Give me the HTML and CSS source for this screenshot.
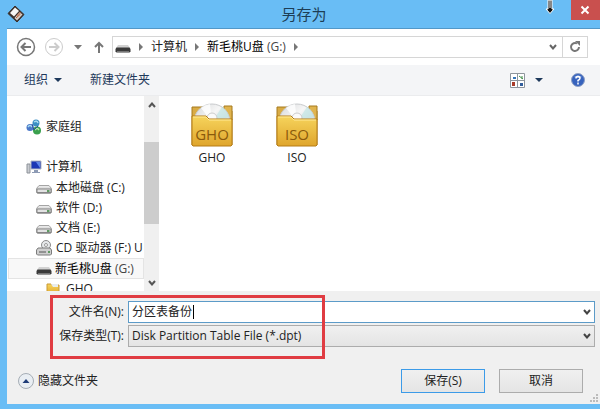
FILE: index.html
```html
<!DOCTYPE html>
<html lang="zh-CN">
<head>
    <meta charset="UTF-8">
    <meta name="viewport" content="width=device-width, initial-scale=1.0">
    <title>另存为</title>
    <link rel="stylesheet" href="styles.css">
</head>
<body>
    <svg class="defs" width="0" height="0" aria-hidden="true">
        <defs>
            <linearGradient id="gold" x1="0" y1="0" x2="0" y2="1">
                <stop offset="0" stop-color="#f6d45c"/>
                <stop offset="1" stop-color="#dfa52c"/>
            </linearGradient>
            <linearGradient id="disc" x1="0" y1="0" x2="1" y2="1">
                <stop offset="0" stop-color="#d4d6d8"/>
                <stop offset="0.4" stop-color="#f6f6f6"/>
                <stop offset="0.6" stop-color="#e2e4e6"/>
                <stop offset="1" stop-color="#a9dcdc"/>
            </linearGradient>
            <linearGradient id="metal" x1="0" y1="0" x2="0" y2="1">
                <stop offset="0" stop-color="#f2f2f2"/>
                <stop offset="1" stop-color="#a9a9a9"/>
            </linearGradient>
            <symbol id="drive" viewBox="0 0 16 16">
                <path d="M3 5.500h10l2.500 3v4l-1 1h-13l-1-1v-4z" fill="url(#metal)" stroke="#a5a5a5"/>
                <path d="M1 9h14v3.500H1z" fill="#e2e2e2" stroke="#858585"/>
                <path d="M11 10h2.500v2H11z" fill="#5f9a63"/>
            </symbol>
            <symbol id="usb" viewBox="0 0 16 16">
                <path d="M3 6h10l2 3H1z" fill="#d2d2d2"/>
                <path d="M1.500 8.500h13l1 1.500v2.500l-1 1h-13l-1-1V10z" fill="#3a3a3a"/>
                <path d="M2 12.500h12" stroke="#777"/>
            </symbol>
            <symbol id="folder-disc" viewBox="0 0 42 46">
                <path d="M1 43V5h12l2 4h26v34z" fill="#d9ab44" stroke="#a67a1f"/>
                <path d="M33 4h8v14h-8z" fill="#e0b44e" stroke="#a67a1f"/>
                <circle cx="21" cy="20" r="18" fill="url(#disc)" stroke="#c9cbcd"/>
                <path d="M21 20L10 6a18 18 0 0 1 9-4z" fill="#fff" opacity="0.8"/>
                <path d="M21 20l17-5a18 18 0 0 0-7-10z" fill="#b9e4e2" opacity="0.6"/>
                <circle cx="21" cy="16" r="5" fill="#fafafa" stroke="#ccc"/>
                <path d="M1 14h14l3 3h23v26l-1 1H2l-1-1z" fill="url(#gold)" stroke="#b67d15"/>
                <path d="M2 15h13l3 3h22" fill="none" stroke="#ffe997"/>
            </symbol>
        </defs>
    </svg>

    <div class="window">
        <header class="titlebar">
            <svg class="app-icon" width="18" height="18" viewBox="0 0 18 18">
                <path d="M8 1L17 9.500L10 17L1 8.500z" fill="#3b302b" stroke="#3b302b" stroke-linejoin="round"/>
                <path d="M8 2.500L12 6L7 11.500L3 8z" fill="#f7f7f5"/>
                <path d="M12.500 7L15.500 9.500L10 15.500L7.500 13z" fill="#d9d0c8"/>
                <path d="M9.500 11l4-4M9 13l4.500-4" stroke="#b55a32"/>
            </svg>
            <h1>另存为</h1>
            <button class="close" aria-label="关闭">
                <svg width="10" height="10" viewBox="0 0 10 10"><path d="M1.500 1.500l7 7M8.500 1.500l-7 7" stroke="#fff" stroke-width="2"/></svg>
            </button>
            <svg class="cursor" width="10" height="14" viewBox="0 0 10 14">
                <path d="M3 0v9H1l4 4.500L9 9H7V0z" fill="#111" stroke="#fff"/>
                <path d="M5 0v8" stroke="#fff"/>
            </svg>
        </header>

        <main class="dialog">
            <nav class="navbar">
                <button class="round" aria-label="后退">
                    <svg width="20" height="20" viewBox="0 0 20 20" fill="none" stroke="#777"><circle cx="10" cy="10" r="8.500" stroke-width="1.500"/><path d="M15 10H6M9.500 6L5.500 10l4 4" stroke-width="2"/></svg>
                </button>
                <button class="round" aria-label="前进">
                    <svg width="20" height="20" viewBox="0 0 20 20" fill="none" stroke="#ccc"><circle cx="10" cy="10" r="8.500"/><path d="M5 10h9M10.500 6l4 4l-4 4" stroke-width="2"/></svg>
                </button>
                <button class="history" aria-label="最近的位置">
                    <svg width="8" height="5" viewBox="0 0 8 5"><path d="M0 0h8L4 4.500z" fill="#777"/></svg>
                </button>
                <button class="up" aria-label="上移">
                    <svg width="10" height="12" viewBox="0 0 10 12"><path d="M5 12V2M1 6l4-4l4 4" fill="none" stroke="#777" stroke-width="2"/></svg>
                </button>
                <div class="address">
                    <svg width="16" height="16"><use href="#usb"/></svg>
                    <svg class="sep" width="4" height="8" viewBox="0 0 4 8"><path d="M0 0l4 4l-4 4z" fill="#777"/></svg>
                    <a href="#">计算机</a>
                    <svg class="sep" width="4" height="8" viewBox="0 0 4 8"><path d="M0 0l4 4l-4 4z" fill="#777"/></svg>
                    <a href="#" class="current">新毛桃U盘 <span>(G:)</span></a>
                    <svg class="sep" width="4" height="8" viewBox="0 0 4 8"><path d="M0 0l4 4l-4 4z" fill="#777"/></svg>
                    <button class="drop" aria-label="以前的位置">
                        <svg width="8" height="6" viewBox="0 0 8 6"><path d="M1 1l3 3.500L7 1" fill="none" stroke="#666" stroke-width="2"/></svg>
                    </button>
                    <button class="refresh" aria-label="刷新">
                        <svg width="12" height="12" viewBox="0 0 12 12"><path d="M8 2.500A4 4 0 1 0 10 6" fill="none" stroke="#777" stroke-width="2"/><path d="M6 0h5v5z" fill="#777"/></svg>
                    </button>
                </div>
            </nav>

            <div class="toolbar">
                <button>组织 <svg width="8" height="4" viewBox="0 0 8 4"><path d="M0 0h8L4 4z" fill="#1e395b"/></svg></button>
                <button>新建文件夹</button>
                <button class="view" aria-label="更改视图">
                    <svg width="15" height="15" viewBox="0 0 15 15">
                        <path d="M.5.500h14v14H.500z" fill="#fff" stroke="#8e959c"/>
                        <path d="M7.500 0v15M0 7.500h15" stroke="#8e959c"/>
                        <path d="M3 4h3v2H3z" fill="#3475b8"/>
                        <path d="M9 3l4 3M12 3v3" stroke="#3f8d46"/>
                        <path d="M2 9h3v4H2z" fill="#a93c2a"/>
                        <path d="M10 10h3v3h-3z" fill="#315d9c"/>
                    </svg>
                    <svg width="8" height="4" viewBox="0 0 8 4"><path d="M0 0h8L4 4z" fill="#1e395b"/></svg>
                </button>
                <button class="help" aria-label="帮助">
                    <svg width="14" height="14" viewBox="0 0 14 14">
                        <circle cx="7" cy="7" r="6.500" fill="#3763bd" stroke="#8fa0c4"/>
                        <path d="M3 4a5 4 0 0 1 8 0q-4 2-8 0" fill="#8ea9e0"/>
                        <path d="M5 5.500Q5 3.500 7 3.500T9 5.300Q9 6.300 7 7.500V8.500M7 9.500v2" fill="none" stroke="#fff" stroke-width="1.500"/>
                    </svg>
                </button>
            </div>

            <div class="browser">
                <aside class="tree">
                    <ul>
                        <li class="group">
                            <svg width="16" height="16" viewBox="0 0 16 16">
                                <circle cx="10" cy="4" r="3.500" fill="#3a8fc4"/>
                                <circle cx="4" cy="8.500" r="3.500" fill="#4a78c8"/>
                                <circle cx="11" cy="11.500" r="4" fill="#3aa04e"/>
                                <path d="M8 3q3-2 4 1M2 8q2-3 4 0" stroke="#a8dcf0" stroke-width="1.500" fill="none"/>
                                <path d="M9 11q2-3 4 0" stroke="#b9e8a5" stroke-width="1.500" fill="none"/>
                                <path d="M6 5l2 6l4-4" stroke="#274f9c" fill="none"/>
                            </svg>
                            <a href="#">家庭组</a>
                        </li>
                        <li class="group">
                            <svg width="16" height="16" viewBox="0 0 16 16">
                                <path d="M1 5h3v9H1z" fill="#c9ccd1" stroke="#8d9299"/>
                                <path d="M5 2h10v8H5z" fill="#1b36b5" stroke="#b0b5c0"/>
                                <path d="M10 3h4v6z" fill="#5f86e8"/>
                                <path d="M8 11h4v2h2v1H6v-1h2z" fill="#8d9bb5"/>
                            </svg>
                            <a href="#">计算机</a>
                        </li>
                        <li><svg width="16" height="16"><use href="#drive"/></svg><a href="#">本地磁盘 (C:)</a></li>
                        <li><svg width="16" height="16"><use href="#drive"/></svg><a href="#">软件 (D:)</a></li>
                        <li><svg width="16" height="16"><use href="#drive"/></svg><a href="#">文档 (E:)</a></li>
                        <li>
                            <svg width="16" height="16" viewBox="0 0 16 16">
                                <circle cx="10" cy="5" r="4.500" fill="#e6e8ea" stroke="#8b8b8b"/>
                                <circle cx="10" cy="5" r="1.500" fill="#fff" stroke="#999"/>
                                <path d="M2 8h12l1.500 2v4l-1 1h-13l-1-1v-4z" fill="#cfcfcf" stroke="#7c7c7c"/>
                                <path d="M3 12h7" stroke="#555"/>
                                <path d="M12 11h2v2h-2z" fill="#5f9a63"/>
                            </svg>
                            <a href="#">CD 驱动器 (F:) U</a>
                        </li>
                        <li class="selected"><svg width="16" height="16"><use href="#usb"/></svg><a href="#">新毛桃U盘 <span>(G:)</span></a></li>
                        <li class="child">
                            <svg width="14" height="14" viewBox="0 0 14 14"><path d="M1 13V2h4l1 1h7v10z" fill="url(#gold)" stroke="#c99a36"/><path d="M5 2h7v3H7z" fill="#e8ecee"/></svg>
                            <a href="#">GHO</a>
                        </li>
                    </ul>
                </aside>
                <div class="scrollbar">
                    <button aria-label="向上滚动"><svg width="8" height="6" viewBox="0 0 8 6"><path d="M1 5l3-3.500L7 5" fill="none" stroke="#555" stroke-width="2"/></svg></button>
                    <div class="thumb"></div>
                    <button aria-label="向下滚动"><svg width="8" height="6" viewBox="0 0 8 6"><path d="M1 1l3 3.500L7 1" fill="none" stroke="#555" stroke-width="2"/></svg></button>
                </div>
                <section class="files">
                    <a href="#" class="file">
                        <span class="thumbnail">
                            <svg width="42" height="46"><use href="#folder-disc"/></svg>
                            <span class="label">GHO</span>
                        </span>
                        GHO
                    </a>
                    <a href="#" class="file">
                        <span class="thumbnail">
                            <svg width="42" height="46"><use href="#folder-disc"/></svg>
                            <span class="label">ISO</span>
                        </span>
                        ISO
                    </a>
                </section>
            </div>

            <form class="bottom">
                <div class="fields">
                    <label for="filename">文件名(N):</label>
                    <div class="combo">
                        <input type="text" id="filename" value="分区表备份">
                        <span class="caret"></span>
                        <button type="button" aria-label="历史文件名"><svg width="8" height="6" viewBox="0 0 8 6"><path d="M1 1l3 3.500L7 1" fill="none" stroke="#444" stroke-width="2"/></svg></button>
                    </div>
                    <label for="filetype">保存类型(T):</label>
                    <div class="select">
                        <select id="filetype">
                            <option>Disk Partition Table File (*.dpt)</option>
                        </select>
                        <svg width="8" height="6" viewBox="0 0 8 6"><path d="M1 1l3 3.500L7 1" fill="none" stroke="#444" stroke-width="2"/></svg>
                    </div>
                    <div class="highlight"></div>
                </div>
                <div class="actions">
                    <button type="button" class="hide-folders">
                        <svg width="16" height="16" viewBox="0 0 16 16"><circle cx="8" cy="8" r="7.500" fill="#e9eef3" stroke="#a5adb5"/><path d="M4.500 10L8 6l3.500 4z" fill="#1f3c78"/></svg>
                        隐藏文件夹
                    </button>
                    <button type="button" class="btn primary">保存(S)</button>
                    <button type="button" class="btn">取消</button>
                </div>
                <svg class="grip" width="8" height="8" viewBox="0 0 8 8"><path d="M6 0h2v2H6zM6 3h2v2H6zM6 6h2v2H6zM3 3h2v2H3zM3 6h2v2H3zM0 6h2v2H0z" fill="#bbb"/></svg>
            </form>
        </main>
    </div>
</body>
</html>
```
FILE: styles.css
```css
* {
    box-sizing: border-box;
}
body {
    margin: 0;
    font-family: "Open Sans", "Noto Sans CJK SC", sans-serif;
    font-size: 12px;
    line-height: 20px;
    color: #222;
}
button, input, select {
    font: inherit;
    color: inherit;
    margin: 0;
    padding: 0;
    border: none;
    background: none;
}
button {
    display: flex;
    align-items: center;
    justify-content: center;
}
a {
    color: inherit;
    text-decoration: none;
}
svg {
    display: block;
    flex: none;
}
.defs {
    position: absolute;
}
.window {
    display: flex;
    flex-direction: column;
    height: 100vh;
    min-height: 400px;
    padding: 0 0 5px 7px;
    background-color: #69bdf5;
}

/* title bar */
.titlebar {
    position: relative;
    display: flex;
    justify-content: space-between;
    height: 29px;
    border-bottom: 1px solid #5298c8;
}
.app-icon {
    margin-top: 5px;
}
.titlebar h1 {
    margin: 0;
    padding-left: 12px;
    font-size: 15px;
    font-weight: normal;
    line-height: 28px;
    color: #1d3d55;
}
.close {
    width: 29px;
    height: 20px;
    background-color: #c9504e;
}
.cursor {
    position: absolute;
    top: 0;
    right: 45px;
}
.dialog {
    flex: 1;
    display: flex;
    flex-direction: column;
    min-height: 0;
    background-color: #fff;
}

/* address row */
.navbar {
    display: flex;
    align-items: center;
    height: 36px;
    padding: 0 12px 0 9px;
}
.round {
    margin-right: 8px;
}
.history {
    margin: 0 12px 0 2px;
}
.up {
    margin-right: 8px;
}
.address {
    flex: 1;
    display: flex;
    align-items: center;
    height: 22px;
    padding-left: 2px;
    border: 1px solid #d6d6d6;
}
.address .sep {
    margin: 0 8px;
}
.current, .selected a {
    color: #000;
}
.current span, .selected span {
    color: #444;
}
.drop {
    width: 18px;
    margin-left: auto;
}
.refresh {
    width: 25px;
    height: 20px;
    border-left: 1px solid #d6d6d6;
}

/* toolbar */
.toolbar {
    display: flex;
    align-items: center;
    gap: 28px;
    height: 31px;
    padding: 0 15px 0 17px;
    background-color: #f4f5f7;
    border-bottom: 1px solid #ebecee;
    color: #1e395b;
}
.toolbar button {
    gap: 6px;
}
.toolbar .view {
    gap: 10px;
    margin-left: auto;
}

/* folder tree and files */
.browser {
    flex: 1;
    display: flex;
    min-height: 0;
    overflow: hidden;
}
.tree {
    width: 137px;
    overflow: hidden;
}
.tree ul {
    margin: 0;
    padding: 21px 0 0 1px;
    list-style: none;
}
.tree li {
    display: flex;
    align-items: center;
    gap: 4px;
    height: 20px;
    padding-left: 28px;
    white-space: nowrap;
}
.tree .group {
    margin-bottom: 20px;
    padding-left: 18px;
}
.tree .group + .group {
    margin-bottom: 1px;
}
.tree .selected {
    gap: 3px;
    height: 21px;
    background-color: #f8f8f8;
    border: 1px solid #e4e4e4;
    padding-left: 27px;
}
.tree .child {
    gap: 6px;
    padding-left: 38px;
}
.scrollbar {
    display: flex;
    flex-direction: column;
    width: 15px;
    background-color: #f0f0f0;
}
.scrollbar button {
    height: 17px;
}
.thumb {
    height: 82px;
    margin: 29px 0 auto;
    background-color: #cdcdcd;
}
.files {
    display: flex;
    align-items: flex-start;
    gap: 43px;
    padding: 6px 32px;
}
.file {
    text-align: center;
}
.thumbnail {
    position: relative;
    display: block;
}
.label {
    position: absolute;
    left: 0;
    right: 0;
    bottom: 4px;
    font-size: 15px;
    color: #8a5a0c;
}

/* file name, type and buttons */
.bottom {
    position: relative;
    padding: 10px 5px 11px 42px;
    background-color: #f0f0f0;
}
.fields {
    position: relative;
    display: grid;
    grid-template-columns: 75px 1fr;
    column-gap: 4px;
    row-gap: 2px;
    align-items: center;
}
.fields label {
    text-align: right;
}
.combo, .select {
    position: relative;
    display: flex;
    height: 22px;
    border: 1px solid #5c9bc8;
    background-color: #fff;
}
.combo input {
    flex: 1;
    min-width: 0;
    padding-left: 3px;
    outline: none;
}
.combo button {
    width: 15px;
}
.caret {
    position: absolute;
    top: 3px;
    left: 64px;
    width: 1px;
    height: 14px;
    background-color: #000;
}
.select {
    align-items: center;
    padding-right: 3px;
    border-color: #acacac;
    background: linear-gradient(#f0f0f0, #e4e4e4);
}
.select select {
    flex: 1;
    min-width: 0;
    padding-left: 3px;
    appearance: none;
    outline: none;
}
.highlight {
    position: absolute;
    top: -6px;
    left: 1px;
    width: 275px;
    height: 64px;
    border: 3px solid #e03c42;
    pointer-events: none;
}
.actions {
    display: flex;
    gap: 14px;
    margin: 22px 12px 0 -31px;
}
.hide-folders {
    gap: 4px;
    margin-right: auto;
}
.btn {
    width: 84px;
    height: 24px;
    border: 1px solid #acacac;
    background: linear-gradient(#f0f0f0, #e5e5e5);
}
.primary {
    border-color: #3c9be8;
}
.grip {
    position: absolute;
    right: 2px;
    bottom: 2px;
}
```
